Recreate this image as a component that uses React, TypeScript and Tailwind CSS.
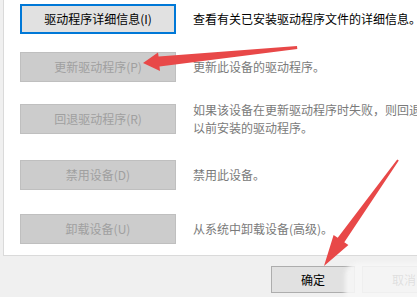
const font = {
  fontFamily: '"Noto Sans CJK SC", "Liberation Sans", sans-serif',
};

const rows = [
  {
    label: "驱动程序详细信息(I)",
    desc: ["查看有关已安装驱动程序文件的详细信息。"],
    active: true,
    mt: "mt-[4px]",
  },
  {
    label: "更新驱动程序(P)",
    desc: ["更新此设备的驱动程序。"],
    active: false,
    mt: "mt-[18px]",
  },
  {
    label: "回退驱动程序(R)",
    desc: ["如果该设备在更新驱动程序时失败，则回退到", "以前安装的驱动程序。"],
    active: false,
    mt: "mt-[19px]",
  },
  {
    label: "禁用设备(D)",
    desc: ["禁用此设备。"],
    active: false,
    mt: "mt-[23px]",
  },
  {
    label: "卸载设备(U)",
    desc: ["从系统中卸载设备(高级)。"],
    active: false,
    mt: "mt-[24px]",
  },
];

export default function App() {
  return (
    <div
      className="relative w-[417px] h-[297px] overflow-hidden bg-[#f0f0f0] text-[12px]"
      style={font}
    >
      <div className="ml-[3px] h-[256px] bg-white border-l border-b border-[#dadada] pl-[16px] flex flex-col">
        {rows.map((r) => (
          <div key={r.label} className={`flex items-center ${r.mt}`}>
            <div
              className={
                r.active
                  ? "w-[156px] h-[30px] shrink-0 flex items-center justify-center bg-[#e1e1e1] border-2 border-[#0078d7] text-black"
                  : "w-[156px] h-[30px] shrink-0 flex items-center justify-center bg-[#cccccc] border border-[#bfbfbf] text-[#a0a0a0]"
              }
            >
              {r.label}
            </div>
            <div
              className={`ml-[17px] whitespace-nowrap leading-[18px] ${
                r.active ? "text-black" : "text-[#7a7a7a]"
              }`}
            >
              {r.desc.map((d) => (
                <div key={d}>{d}</div>
              ))}
            </div>
          </div>
        ))}
      </div>

      <div className="flex mt-[10px] ml-[271px] gap-[7px]">
        <div className="w-[84px] h-[27px] shrink-0 flex items-center justify-center bg-[#e1e1e1] border border-[#adadad] text-black">
          确定
        </div>
        <div className="w-[84px] h-[27px] shrink-0 flex items-center justify-center bg-[#e1e1e1] border border-[#adadad] text-black">
          取消
        </div>
      </div>

      {/* watermark smudge */}
      <div className="absolute left-[345px] top-[262px] w-[80px] h-[40px] rounded-tl-[14px] bg-[#f6f6f6]/90 blur-[2px]" />

      {/* red arrows */}
      <svg
        className="absolute left-0 top-0"
        width="417"
        height="297"
        viewBox="0 0 417 297"
      >
        <polygon
          fill="#e84848"
          points="143,63 158,52.5 158.6,56.6 297,46 297.3,49 159.5,66.6 160,71"
        />
        <polygon
          fill="#e84848"
          points="324,266 333.6,234.9 337.7,237.7 397.2,159.4 398.8,160.6 344.3,242.3 348.4,245.1"
        />
      </svg>
    </div>
  );
}
